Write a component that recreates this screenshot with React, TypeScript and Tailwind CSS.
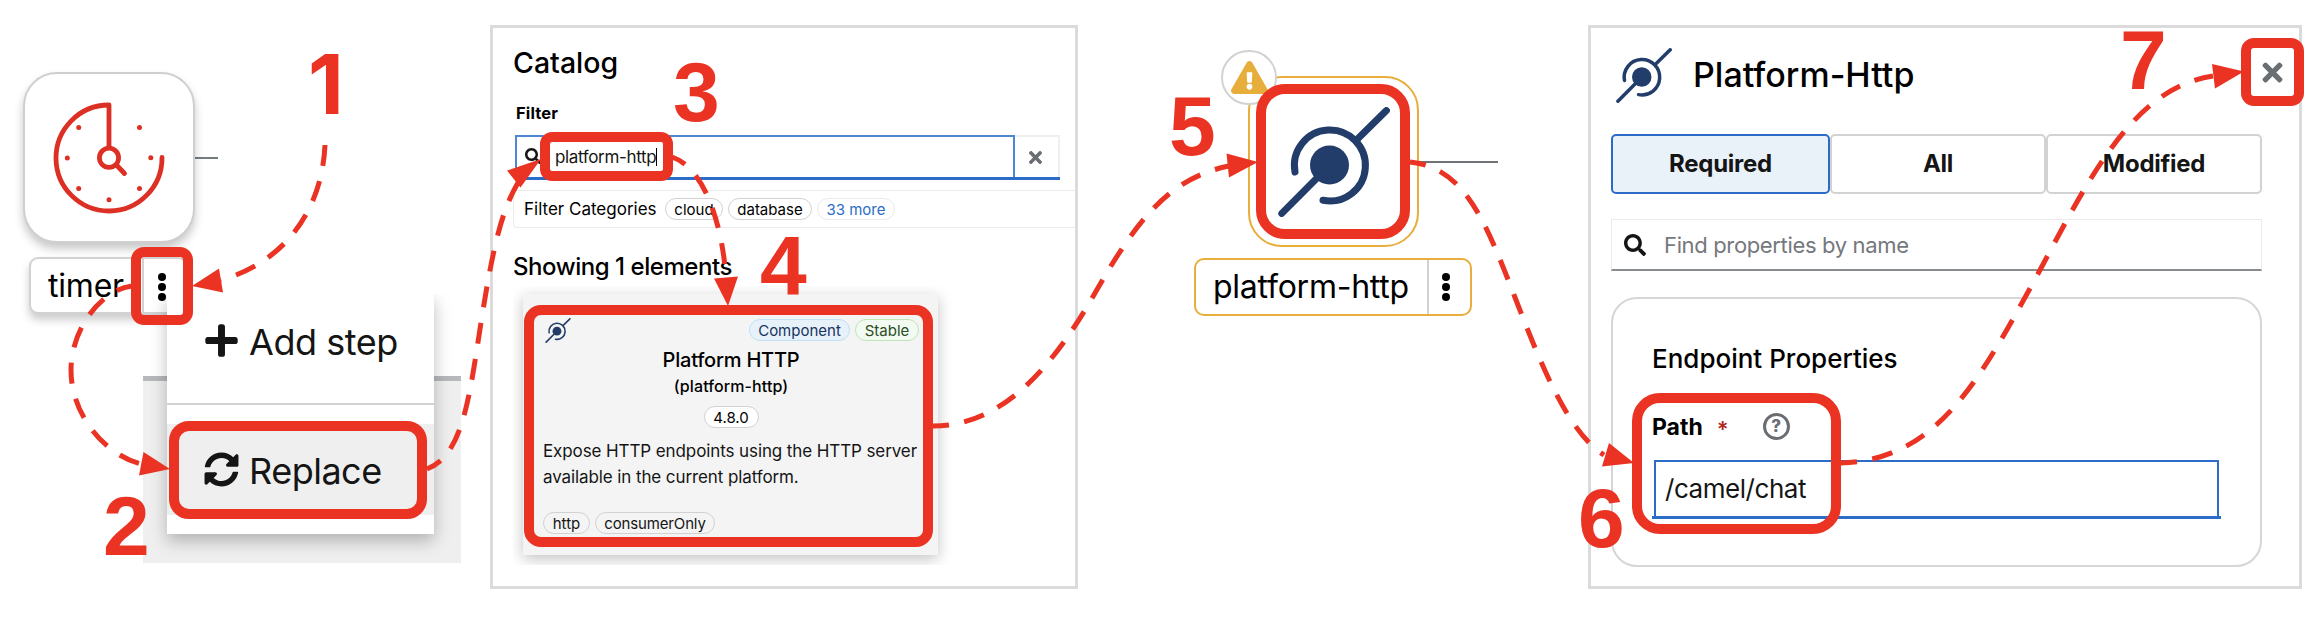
import type { ReactNode } from "react";
import { FaExclamationTriangle, FaPlus, FaSearch, FaSyncAlt, FaTimes } from "react-icons/fa";

function PlatformIcon({ className }: { className: string }) {
  return (
    <svg viewBox="0 0 112 110" className={className} fill="none" stroke="#223d6a" strokeWidth="7" strokeLinecap="round">
      <circle cx="51.5" cy="58" r="19.5" fill="#223d6a" stroke="none" />
      <path d="M17 65A35.5 35.5 0 1 1 45 93.3" />
      <path d="M108.4 3.6L79 32.5M3.8 106.4L45 65" />
    </svg>
  );
}

function TimerIcon() {
  return (
    <svg viewBox="0 0 116 116" className="h-[116px] w-[116px]" fill="none" stroke="#dd3024" strokeWidth="4.8" strokeLinecap="round" strokeLinejoin="round">
      <path d="M111 57.5A53 53 0 1 1 58 5V47.5" />
      <circle cx="58" cy="57.8" r="9.6" />
      <path d="M65.5 65L73.5 73.5" />
      <g fill="#dd3024" stroke="none">
        <circle cx="27.7" cy="27.5" r="2.5" />
        <circle cx="88.5" cy="27.5" r="2.5" />
        <circle cx="16.3" cy="58" r="2.5" />
        <circle cx="99.8" cy="57.8" r="2.5" />
        <circle cx="27.7" cy="88.4" r="2.5" />
        <circle cx="88.5" cy="88.4" r="2.5" />
        <circle cx="58" cy="99.8" r="2.5" />
      </g>
    </svg>
  );
}

function Kebab() {
  return (
    <span className="flex flex-col items-center gap-[2px]">
      <span className="h-2 w-2 rounded-full bg-black" />
      <span className="h-2 w-2 rounded-full bg-black" />
      <span className="h-2 w-2 rounded-full bg-black" />
    </span>
  );
}

function Chip({ className, children }: { className: string; children: ReactNode }) {
  return (
    <span className={`flex h-[22px] items-center justify-center rounded-full border text-[15px] leading-none whitespace-nowrap ${className}`}>
      {children}
    </span>
  );
}

function TimerCanvas() {
  return (
    <section className="relative h-[620px] w-[490px] shrink-0">
      <div className="absolute top-[157px] left-[194px] h-[2px] w-6 bg-[#757c80]" />
      <div className="absolute top-[72px] left-[23px] flex h-[171px] w-[172px] items-center justify-center rounded-[34px] border-2 border-[#cfcfcf] bg-white shadow-[0_6px_10px_rgba(0,0,0,0.22)]">
        <TimerIcon />
      </div>
      <div className="absolute top-[257px] left-[29px] flex h-[57px] w-[158px] items-center rounded-[9px] border-2 border-[#d2d2d2] bg-white shadow-[0_6px_9px_rgba(0,0,0,0.2)]">
        <span className="w-[111px] pl-[17px] text-[32px] leading-none tracking-[-0.2px]">timer</span>
        <span className="flex h-full w-[40px] items-center justify-center border-l-2 border-[#d2d2d2] pr-[3px] pt-[3px]">
          <Kebab />
        </span>
      </div>
      <div className="absolute top-[294px] left-[143px] h-[269px] w-[318px] overflow-hidden">
        <div className="mt-[82px] h-[187px] border-t-[5px] border-[#b6b8bc] bg-[#efefef]" />
      </div>
      <div className="absolute top-[294px] left-[143px] flex h-[269px] w-[318px] justify-center overflow-hidden">
        <div className="mr-[3px] flex h-[240px] w-[267px] flex-col bg-white shadow-[0_7px_16px_rgba(0,0,0,0.26)]">
          <div className="flex h-[111px] items-center border-b-2 border-[#d2d2d2] pl-[38px] text-[#151515]">
            <FaPlus className="mt-[-17px] h-[37px] w-[33px]" />
            <span className="mt-[-14px] ml-[11px] text-[36px] leading-none tracking-[-0.45px]">Add step</span>
          </div>
          <div className="mt-[19px] flex h-[91px] items-center bg-[#efefef] pl-[37px] text-[#151515]">
            <FaSyncAlt className="h-[35px] w-[35px]" />
            <span className="mt-[2px] ml-[10px] text-[36px] leading-none tracking-[-0.5px]">Replace</span>
          </div>
        </div>
      </div>
    </section>
  );
}

function CatalogPanel() {
  return (
    <section className="mt-[25px] flex h-[564px] w-[588px] shrink-0 flex-col border-[3px] border-[#dbdbdb] bg-white pl-5">
      <h1 className="mt-[15px] h-10 text-[28.5px] leading-10 font-medium">Catalog</h1>
      <label className="mt-[18px] ml-[3px] h-6 text-[16.5px] leading-6 font-bold tracking-[0.15px]">Filter</label>
      <div className="mt-[10px] ml-[2px] flex h-[45px] w-[545px] border-b-[3px] border-[#2b6cc8]">
        <div className="flex w-[500px] items-center border-2 border-b-0 border-[#4f86d4] pl-2 text-[#151515]">
          <FaSearch className="mt-[-2px] h-4 w-4" />
          <span className="ml-[14px] text-[17px] leading-none tracking-[-0.35px]">platform-http</span>
          <span className="h-[18px] w-[1px] bg-black" />
        </div>
        <div className="flex flex-1 items-center justify-center border-t-2 border-r-2 border-[#efefef]">
          <FaTimes className="mr-[2px] h-[19px] w-[19px] text-[#6a6e73]" />
        </div>
      </div>
      <div className="mt-[10px] flex h-[38px] items-center rounded-l-[4px] border border-r-0 border-[#ebebeb] pl-[10px]">
        <span className="w-[141px] text-[17px] leading-none">Filter Categories</span>
        <Chip className="w-[58px] border-[#d2d2d2]">cloud</Chip>
        <Chip className="ml-[5px] w-[84px] border-[#d2d2d2]">database</Chip>
        <Chip className="ml-[5px] w-[78px] border-[#ebebeb] text-[#2b6cc8]">33 more</Chip>
      </div>
      <h2 className="mt-[23px] h-8 text-[24px] leading-8 font-medium tracking-[-0.45px]">Showing 1 elements</h2>
      <div className="mt-[3px] h-[279px] w-[446px] overflow-hidden pt-2 pl-[10px]">
        <article className="flex h-[261px] w-[415px] flex-col bg-[#f4f4f4] pt-6 pr-[19px] pl-5 shadow-[0_4px_14px_rgba(0,0,0,0.24)]">
          <div className="flex h-6 items-center">
            <PlatformIcon className="ml-[2px] h-[25px] w-[26px]" />
            <Chip className="ml-auto w-[101px] border-[#bee1f4] bg-[#e7f1fa] text-[#17335e]">Component</Chip>
            <Chip className="ml-[5px] w-[64px] border-[#bde5b8] bg-[#f3faf2] text-[#2a4d24]">Stable</Chip>
          </div>
          <h3 className="mt-1 text-center text-[20px] leading-7 font-medium tracking-[-0.2px]">Platform HTTP</h3>
          <p className="text-center text-[16px] leading-6 font-medium tracking-[0.1px]">(platform-http)</p>
          <div className="mt-2 flex justify-center">
            <Chip className="w-[55px] border-[#d2d2d2] bg-white">4.8.0</Chip>
          </div>
          <p className="mt-[10px] text-[17px] leading-[26px] tracking-[-0.1px] whitespace-nowrap text-[#151515]">
            Expose HTTP endpoints using the HTTP server
            <br />
            available in the current platform.
          </p>
          <div className="mt-[22px] flex gap-[5px] text-[#151515]">
            <Chip className="w-[47px] border-[#d2d2d2]">http</Chip>
            <Chip className="w-[120px] border-[#d2d2d2] tracking-[-0.15px]">consumerOnly</Chip>
          </div>
        </article>
      </div>
    </section>
  );
}

function PlatformCanvas() {
  return (
    <section className="relative h-[620px] w-[510px] shrink-0">
      <div className="absolute top-[161px] left-[340px] h-[2px] w-20 bg-[#6f7378]" />
      <div className="absolute top-[76px] left-[170px] flex h-[171px] w-[171px] items-center justify-center rounded-[34px] border-2 border-[#e8ae3c] bg-white">
        <PlatformIcon className="h-[110px] w-[112px]" />
      </div>
      <div className="absolute top-[50px] left-[143px] flex h-[55px] w-[56px] items-center justify-center rounded-full border-2 border-[#d2d2d2] bg-white">
        <FaExclamationTriangle className="h-[33px] w-[37px] text-[#e8ae3c]" />
      </div>
      <div className="absolute top-[258px] left-[116px] flex h-[58px] w-[278px] items-center rounded-[10px] border-2 border-[#e8ae3c] bg-white">
        <span className="w-[231px] pl-[17px] text-[32px] leading-none tracking-[-0.25px]">platform-http</span>
        <span className="flex h-full flex-1 items-center justify-center border-l-2 border-[#d2d2d2] pr-2">
          <Kebab />
        </span>
      </div>
    </section>
  );
}

function PropertiesPanel() {
  return (
    <section className="mt-[25px] flex h-[564px] w-[714px] shrink-0 flex-col border-[3px] border-[#dbdbdb] bg-white pr-[37px] pl-5">
      <header className="mt-5 flex h-14 items-start pl-[5px]">
        <PlatformIcon className="h-[55px] w-[56px]" />
        <h1 className="mt-[7px] ml-[21px] text-[34px] leading-10 font-medium">Platform-Http</h1>
      </header>
      <div className="mt-[30px] flex h-[60px] text-[24px] leading-none font-bold tracking-[-0.25px] text-[#151515]">
        <div className="flex w-[219px] items-center justify-center rounded-[5px] border-2 border-[#2b6cc8] bg-[#e9f1f9]">Required</div>
        <div className="flex w-[216px] items-center justify-center rounded-[5px] border-2 border-[#d2d2d2]">All</div>
        <div className="flex w-[216px] items-center justify-center rounded-[5px] border-2 border-[#d2d2d2]">Modified</div>
      </div>
      <div className="mt-[25px] flex h-[52px] items-center border border-b-2 border-[#ebebeb] border-b-[#8a8d90] pl-3">
        <FaSearch className="h-[22px] w-[22px] text-[#151515]" />
        <span className="ml-[18px] text-[22px] leading-none tracking-[-0.35px] text-[#75787d]">Find properties by name</span>
      </div>
      <div className="mt-[26px] flex h-[270px] flex-col rounded-[26px] border-2 border-[#d6d6d6] pl-[39px]">
        <h2 className="mt-[44px] text-[26px] leading-8 font-medium">Endpoint Properties</h2>
        <div className="mt-9 flex h-8 items-center">
          <span className="text-[23px] leading-none font-bold">Path</span>
          <span className="mt-[4px] ml-[14px] text-[22px] leading-none font-semibold text-[#b1271b]">*</span>
          <span className="mt-[-2px] ml-[34px] flex h-[27px] w-[27px] items-center justify-center rounded-full border-[3px] border-[#6a6e73] text-[17px] leading-none font-extrabold text-[#6a6e73]">?</span>
        </div>
        <div className="mt-[17px] h-[59px] w-[569px] border-b-[3px] border-[#2b6cc8] px-[2px]">
          <div className="flex h-full items-center border-2 border-b-0 border-[#2b6cc8] pl-[9px] text-[26px] leading-none tracking-[-0.45px] text-[#151515]">
            /camel/chat
          </div>
        </div>
      </div>
    </section>
  );
}

const arrows = [
  { d: "M325 145C322 210 285 262 221 280", offset: 0, head: "192,286 219,268.5 223,292.5" },
  { d: "M132 286C100 290 71 330 71 370C71 415 105 455 141 464", offset: 5, head: "170,469 143.5,452 139,475.5" },
  { d: "M427 469C465 455 470 390 483 310S505 205 519 181", offset: 5, head: "541,159 507,170.5 520.5,187.5" },
  { d: "M672 157C705 168 722 225 726 277", offset: 6, head: "728,306 714,278.5 738,276.5" },
  { d: "M933 426C1000 426 1050 372 1095 293C1135 223 1168 178 1229 166", offset: 5, head: "1258,162 1226.5,153.5 1229,177.5" },
  { d: "M1410 162C1465 168 1485 220 1516 300C1542 367 1568 432 1604 455", offset: 5, head: "1634,463 1609,443 1602,466.5" },
  { d: "M1841 463C1935 460 1977 385 2033 283C2085 187 2130 88 2213 76", offset: 5, head: "2244,71.5 2212,64 2215,88.5" },
];

const frames = [
  "top-[247px] left-[131px] h-[78px] w-[62px] rounded-[13px]",
  "top-[421px] left-[169px] h-[98px] w-[258px] rounded-[20px]",
  "top-[132px] left-[540px] h-[49px] w-[133px] rounded-[12px]",
  "top-[305px] left-[524px] h-[242px] w-[409px] rounded-[17px]",
  "top-[84px] left-[1256px] h-[155px] w-[154px] rounded-[29px]",
  "top-[393px] left-[1632px] h-[141px] w-[209px] rounded-[28px]",
  "top-[38px] left-[2241px] h-[68px] w-[63px] rounded-[13px]",
];

const steps = [
  { n: "1", at: "top-[43px] left-[308px] font-['Inter',sans-serif] text-[83px]" },
  { n: "2", at: "top-[484px] left-[103px] text-[84px]" },
  { n: "3", at: "top-[50px] left-[673px] text-[84px]" },
  { n: "4", at: "top-[224px] left-[760px] text-[84px]" },
  { n: "5", at: "top-[84px] left-[1169px] text-[84px]" },
  { n: "6", at: "top-[476px] left-[1578px] text-[84px]" },
  { n: "7", at: "top-[18px] left-[2120px] text-[84px]" },
];

function Annotations() {
  return (
    <div className="pointer-events-none absolute inset-0 font-['Liberation_Sans',Arial,sans-serif]">
      {frames.map((c) => (
        <div key={c} className={`absolute border-[10px] border-[#ea3323] ${c}`} />
      ))}
      <svg viewBox="0 0 2322 620" className="absolute inset-0 h-[620px] w-[2322px]">
        {arrows.map((a) => (
          <g key={a.d}>
            <path d={a.d} fill="none" stroke="#ea3323" strokeWidth="5" strokeDasharray="21 15.5" strokeDashoffset={a.offset} />
            <polygon points={a.head} fill="#ea3323" />
          </g>
        ))}
      </svg>
      {steps.map((s) => (
        <span key={s.n} className={`absolute leading-none font-bold text-[#ea3323] ${s.at}`}>
          {s.n}
        </span>
      ))}
    </div>
  );
}

export default function App() {
  return (
    <main className="relative flex h-[620px] w-[2322px] overflow-hidden bg-white font-['Inter',sans-serif] text-black">
      <TimerCanvas />
      <CatalogPanel />
      <PlatformCanvas />
      <PropertiesPanel />
      <div className="absolute top-[61px] left-[2258px] flex h-[22px] w-[29px] items-center justify-center">
        <FaTimes className="h-[29px] w-[29px] shrink-0 text-[#6a6e73]" />
      </div>
      <Annotations />
    </main>
  );
}
